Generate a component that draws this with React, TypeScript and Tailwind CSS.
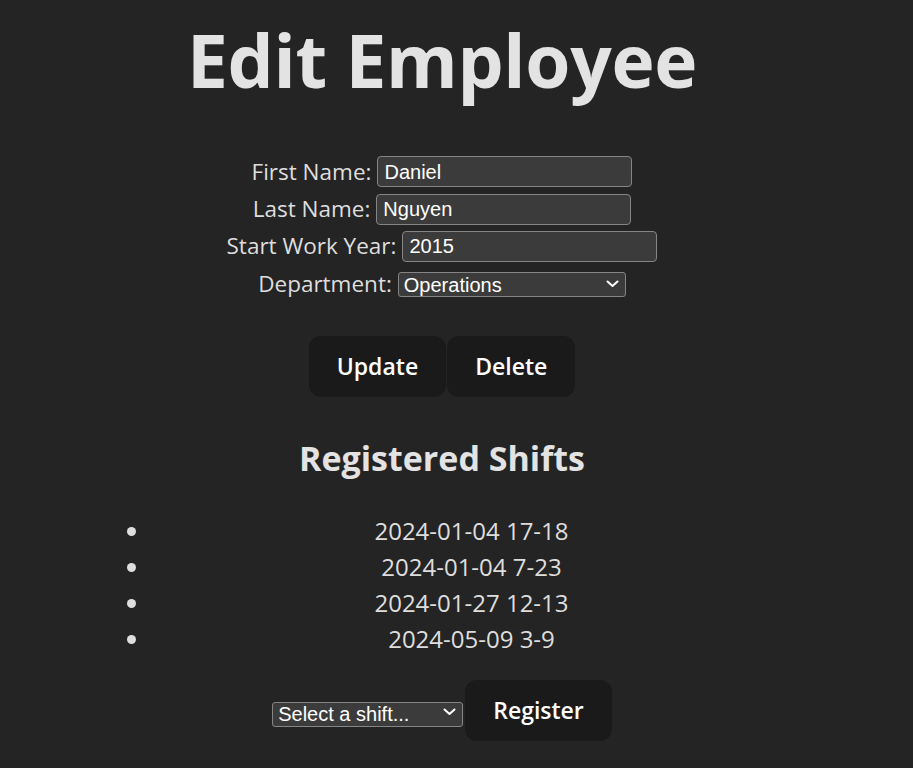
import { useState } from "react";

const shifts = ["2024-01-04 17-18", "2024-01-04 7-23", "2024-01-27 12-13", "2024-05-09 3-9"];

const Chevron = () => (
  <svg
    className="pointer-events-none absolute right-[7px] top-1/2 -translate-y-1/2"
    width="13"
    height="8"
    viewBox="0 0 13 8"
    fill="none"
  >
    <path d="M1.5 1.5 L6.5 6 L11.5 1.5" stroke="#ffffff" strokeWidth="2" strokeLinecap="round" strokeLinejoin="round" />
  </svg>
);

const Field = ({ label, value }: { label: string; value: string }) => {
  const [val, setVal] = useState(value);
  return (
    <div className="flex h-[37.4px] items-center justify-center">
      <label className="mr-[6px]">{label}</label>
      <input
        value={val}
        onChange={(e) => setVal(e.target.value)}
        className="h-[31px] w-[255px] rounded-[4px] border border-[#858585] bg-[#3b3b3b] px-[6px] font-['Liberation_Sans',Arial,sans-serif] text-[20px] text-white outline-none"
      />
    </div>
  );
};

const Btn = ({ children }: { children: string }) => (
  <button className="h-[61px] rounded-[12px] bg-[#1a1a1a] px-[28px] text-[23px] font-semibold text-white">
    {children}
  </button>
);

export default function App() {
  return (
    <div className="min-h-screen bg-[#242424] font-['Open_Sans','Noto_Sans',sans-serif] text-[24px] leading-[36px] text-[#dedede]">
      <div className="w-[884px] pt-[15px] text-center">
        <h1 className="text-[73px] leading-[90px] font-bold tracking-[-0.3px] text-[#e3e3e3]">Edit Employee</h1>

        <div className="mt-[48px] flex flex-col text-[22.5px]">
          <Field label="First Name:" value="Daniel" />
          <Field label="Last Name:" value="Nguyen" />
          <Field label="Start Work Year:" value="2015" />
          <div className="flex h-[37.4px] items-center justify-center">
            <label className="mr-[6px]">Department:</label>
            <div className="relative">
              <select className="h-[25px] w-[228px] appearance-none rounded-[3px] border border-[#858585] bg-[#3b3b3b] px-[5px] font-['Liberation_Sans',Arial,sans-serif] text-[20px] leading-[22px] text-white outline-none">
                <option>Operations</option>
                <option>Sales</option>
                <option>Finance</option>
              </select>
              <Chevron />
            </div>
          </div>
        </div>

        <div className="mt-[33px] flex justify-center gap-[1px]">
          <Btn>Update</Btn>
          <Btn>Delete</Btn>
        </div>

        <h2 className="mt-[37px] text-[34px] leading-[48px] font-bold text-[#e3e3e3]">Registered Shifts</h2>

        <ul className="ml-[111px] mt-[31px] w-[681px] list-disc pl-[40px]">
          {shifts.map((s) => (
            <li key={s} className="leading-[36px]">
              {s}
            </li>
          ))}
        </ul>

        <div className="mt-[23px] flex items-center justify-center">
          <div className="relative mt-[4px]">
            <select className="h-[25px] w-[191px] appearance-none rounded-[3px] border border-[#858585] bg-[#3b3b3b] px-[5px] font-['Liberation_Sans',Arial,sans-serif] text-[20px] leading-[22px] text-white outline-none">
              <option>Select a shift...</option>
              <option>2024-06-01 9-17</option>
            </select>
            <Chevron />
          </div>
          <button className="ml-[2px] h-[61px] rounded-[12px] bg-[#1a1a1a] px-[28px] text-[23px] font-semibold text-white">
            Register
          </button>
        </div>
      </div>
    </div>
  );
}
